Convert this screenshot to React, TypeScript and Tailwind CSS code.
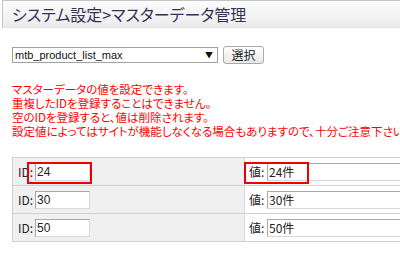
import React from "react";

const jp = { fontFamily: '"Noto Sans CJK JP", "Liberation Sans", sans-serif' };

function Row({ id, val }: { id: string; val: string }) {
  return (
    <div className="flex border-b border-[#d0d0d0] h-[28px]">
      <div className="w-[232px] shrink-0 bg-[#f0f0f0] border-r border-[#d8d8d8] flex items-center pl-[5px]">
        <span className="text-[12px] text-[#222] w-[17px]" style={jp}>ID:</span>
        <div className="w-[55px] h-[18px] border border-[#a8a8a8] border-b-[#d8d8d8] border-r-[#d8d8d8] bg-white flex items-center pl-[1px] text-[12px] text-[#222]" style={{ fontFamily: '"Liberation Sans", sans-serif' }}>
          {id}
        </div>
      </div>
      <div className="flex-1 bg-white flex items-center pl-[4px]">
        <span className="text-[12px] text-[#222] w-[18px]" style={jp}>値:</span>
        <div className="flex-1 h-[18px] border border-[#a8a8a8] border-r-0 border-b-[#d8d8d8] bg-white flex items-center pl-[1px] text-[12px] text-[#222]" style={jp}>
          {val}
        </div>
      </div>
    </div>
  );
}

export default function App() {
  return (
    <div className="w-[400px] h-[253px] bg-white overflow-hidden relative" style={jp}>
      <div className="h-[28px] ml-[2px] border-t border-l border-[#c4c4c4] border-b border-b-[#e4e4e4] bg-gradient-to-b from-[#fdfdfd] to-[#ebebeb] flex items-center pl-[9px]">
        <span className="text-[16px] text-[#333355] leading-none" style={{ ...jp, fontFeatureSettings: '"palt"' }}>
          システム設定&gt;マスターデータ管理
        </span>
      </div>
      <div className="flex items-center pl-[12px] mt-[18px] h-[18px]">
        <div className="w-[206px] h-[16px] border border-[#a0a0a0] bg-white flex items-center justify-between pl-[2px] pr-[4px]">
          <span className="text-[11px] text-[#111] leading-none" style={{ fontFamily: '"Liberation Sans", sans-serif' }}>mtb_product_list_max</span>
          <span className="text-[8px] text-[#111] leading-none">▼</span>
        </div>
        <div className="ml-[5px] w-[41px] h-[18px] border border-[#aaaaaa] rounded-[3px] bg-gradient-to-b from-[#ffffff] to-[#e8e8e8] flex items-center justify-center text-[12px] text-[#222] leading-none">
          選択
        </div>
      </div>
      <div className="pl-[12px] mt-[18px] text-[11.5px] leading-[14px] text-[#ff0000] whitespace-nowrap" style={{ ...jp, fontFeatureSettings: '"palt"' }}>
        <div>マスターデータの値を設定できます。</div>
        <div>重複したIDを登録することはできません。</div>
        <div>空のIDを登録すると、値は削除されます。</div>
        <div>設定値によってはサイトが機能しなくなる場合もありますので、十分ご注意下さい。</div>
      </div>
      <div className="ml-[12px] mt-[19px] border-t border-l border-[#d0d0d0]">
        <Row id="24" val="24件" />
        <Row id="30" val="30件" />
        <Row id="50" val="50件" />
      </div>
      <div className="absolute left-[27px] top-[162px] w-[65px] h-[22px] border-2 border-[#ee0000]" />
      <div className="absolute left-[244px] top-[162px] w-[65px] h-[22px] border-2 border-[#ee0000]" />
    </div>
  );
}
